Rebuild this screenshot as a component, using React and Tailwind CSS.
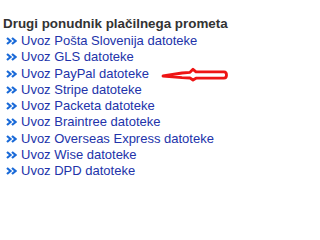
import React from "react";

const LINKS = [
  "Uvoz Pošta Slovenija datoteke",
  "Uvoz GLS datoteke",
  "Uvoz PayPal datoteke",
  "Uvoz Stripe datoteke",
  "Uvoz Packeta datoteke",
  "Uvoz Braintree datoteke",
  "Uvoz Overseas Express datoteke",
  "Uvoz Wise datoteke",
  "Uvoz DPD datoteke",
];

const Chevrons = () => (
  <svg width="11" height="8" viewBox="0 0 11 8" className="shrink-0">
    <path d="M1 1 L4.5 4 L1 7" fill="none" stroke="#1a6ad8" strokeWidth="2.2" />
    <path d="M6 1 L9.5 4 L6 7" fill="none" stroke="#1a6ad8" strokeWidth="2.2" />
  </svg>
);

// red hand drawn arrow pointing at the PayPal row
const RedArrow = () => (
  <svg width="72" height="20" viewBox="0 0 72 20" className="absolute left-[160px] top-[64px]">
    <path
      d="M3 12 L22 9 L30 8.3 L33 5.3 L36 7.8 L64 7.8 Q66.5 7.8 66.5 11 Q66.5 14.2 64 14.2 L36 14.2 L33 16 L30 14 L22 13.6 Z"
      fill="white"
      stroke="#ee1414"
      strokeWidth="2.8"
      strokeLinejoin="round"
    />
  </svg>
);

export default function App() {
  return (
    <div className="relative w-[317px] h-[203px] bg-white pt-[16px] pl-[3px] font-['Liberation_Sans',Arial,sans-serif]">
      <h3 className="text-[13.4px] leading-[16px] font-bold text-[#333]">
        Drugi ponudnik plačilnega prometa
      </h3>
      <ul className="mt-[1px]">
        {LINKS.map((text) => (
          <li key={text} className="flex items-center h-[16.25px] pl-[3px]">
            <Chevrons />
            <a className="ml-[4px] text-[13px] leading-[16px] text-[#2233aa] cursor-pointer">
              {text}
            </a>
          </li>
        ))}
      </ul>
      <RedArrow />
    </div>
  );
}
